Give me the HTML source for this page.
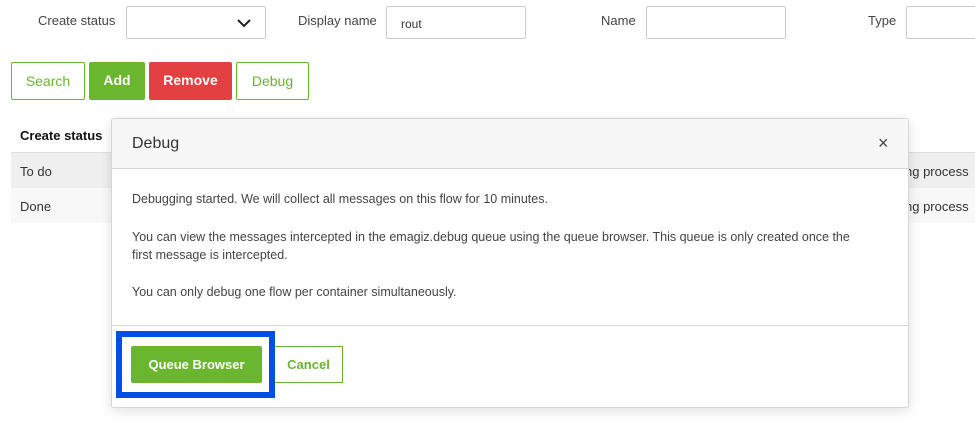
<!DOCTYPE html>
<html><head><style>
*{box-sizing:border-box;margin:0;padding:0}
body{width:975px;height:427px;background:#fff;font-family:"Liberation Sans",sans-serif;color:#333;position:relative;overflow:hidden}
.a{position:absolute}
.lbl{font-size:13px;color:#444;top:13px}
.inp{border:1px solid #ccc;border-radius:2px;top:6px;height:33px;background:#fff}
.btn{position:absolute;top:62px;height:38px;border-radius:2px;font-size:14px;line-height:36px;text-align:center;font-weight:bold}
.ol{border:1px solid #6ab42f;color:#6ab42f;background:#fff}
.p{font-size:12.5px;color:#444;position:absolute;left:20px;line-height:18px}
</style></head><body>
<div class="a lbl" style="left:38px">Create status</div>
<div class="a inp" style="left:126px;width:140px"><svg class="a" style="left:110px;top:11px" width="14" height="10"><path d="M1 2 L7 8 L13 2" stroke="#222" stroke-width="2" fill="none"/></svg></div>
<div class="a lbl" style="left:298px">Display name</div>
<div class="a inp" style="left:386px;width:140px;font-size:12px;padding:10px 0 0 14px">rout</div>
<div class="a lbl" style="left:601px">Name</div>
<div class="a inp" style="left:646px;width:140px"></div>
<div class="a lbl" style="left:868px">Type</div>
<div class="a inp" style="left:906px;width:80px"></div>
<div class="btn ol" style="left:11px;width:74px;font-weight:normal">Search</div>
<div class="btn" style="left:89px;width:56px;background:#6ab72f;color:#fff">Add</div>
<div class="btn" style="left:149px;width:83px;background:#e34042;color:#fff">Remove</div>
<div class="btn ol" style="left:236px;width:73px;font-weight:normal">Debug</div>
<div class="a" style="left:20px;top:128px;font-size:13px;font-weight:bold;color:#111">Create status</div>
<div class="a" style="left:11px;top:152px;width:964px;height:1px;background:#ddd"></div>
<div class="a" style="left:11px;top:153px;width:964px;height:35px;background:#efefef"></div>
<div class="a" style="left:11px;top:188px;width:964px;height:35px;background:#f8f8f8"></div>
<div class="a" style="left:20px;top:164px;font-size:13px">To do</div>
<div class="a" style="left:20px;top:199px;font-size:13px">Done</div>
<div class="a" style="left:905px;top:164px;font-size:13px">ng process</div>
<div class="a" style="left:905px;top:199px;font-size:13px">ng process</div>
<div class="a" style="left:111px;top:118px;width:798px;height:290px;background:#fff;border:1px solid #d6d6d6;border-radius:3px;box-shadow:0 3px 12px rgba(0,0,0,.12);overflow:hidden">
 <div class="a" style="left:0;top:0;width:798px;height:50px;background:#f7f7f7;border-bottom:1px solid #d6d6d6"></div>
 <div class="a" style="left:20px;top:16px;font-size:16px;color:#333">Debug</div>
 <div class="a" style="left:766px;top:14px;font-size:18px;color:#444">×</div>
 <div class="p" style="top:71px">Debugging started. We will collect all messages on this flow for 10 minutes.</div>
 <div class="p" style="top:109px;width:720px">You can view the messages intercepted in the emagiz.debug queue using the queue browser. This queue is only created once the first message is intercepted.</div>
 <div class="p" style="top:164px">You can only debug one flow per container simultaneously.</div>
 <div class="a" style="left:0;top:206px;width:798px;height:1px;background:#d6d6d6"></div>
</div>
<div class="a" style="left:116px;top:331px;width:159px;height:67px;border:6px solid #0050e6"></div>
<div class="a" style="left:131px;top:346px;width:131px;height:37px;background:#6ab72f;color:#fff;font-weight:bold;font-size:13px;text-align:center;line-height:37px;border-radius:2px">Queue Browser</div>
<div class="a" style="left:275px;top:346px;width:68px;height:37px;border:1px solid #6ab42f;border-left:none;color:#6ab42f;font-weight:bold;font-size:13px;text-align:center;line-height:35px">Cancel</div>
</body></html>
